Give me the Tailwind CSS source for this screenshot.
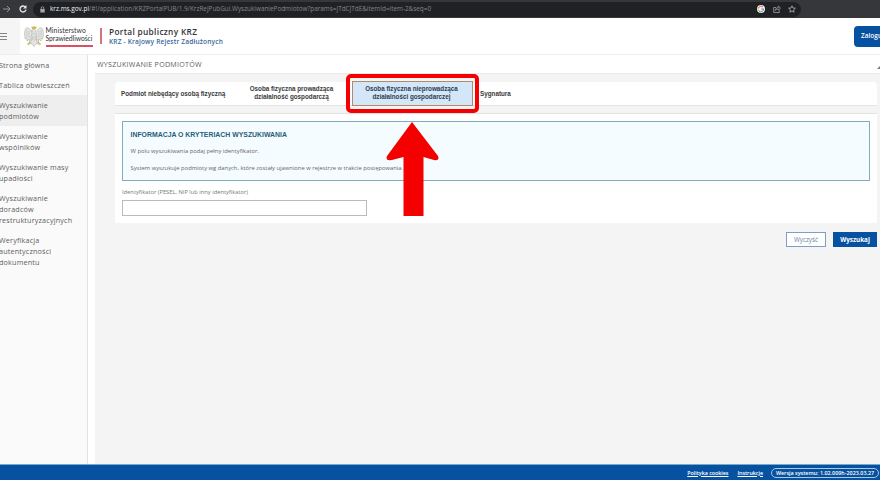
<!DOCTYPE html>
<html lang="pl">
<head>
  <meta charset="UTF-8" />
  <meta name="viewport" content="width=device-width, initial-scale=1" />
  <title>Portal publiczny KRZ</title>
  <script src="https://cdn.jsdelivr.net/npm/@tailwindcss/browser@4"></script>
</head>
<body class="relative w-[880px] h-[480px] overflow-hidden flex flex-col bg-white font-['Open_Sans',sans-serif] text-[#555] whitespace-nowrap">

  <!-- browser bar -->
  <div class="h-[18px] shrink-0 bg-[#36373a] flex items-center">
    <svg class="w-2 h-2 ml-[3px]" viewBox="0 0 8 8" fill="none" stroke="#929396" stroke-width="1"><path d="M0 4h7M4 1l3 3-3 3" /></svg>
    <svg class="w-2 h-2 ml-2" viewBox="0 0 8 8" fill="none" stroke="#e8e8e8" stroke-width="1.3"><path d="M6.5 2.2A3 3 0 1 0 7 4.7" /><path d="M7.5 0v3.4H4.1z" fill="#e8e8e8" stroke="none" /></svg>
    <div class="ml-1.5 w-[768px] h-[15px] rounded-full bg-[#202124] flex items-center">
      <svg class="w-[5px] h-[7px] ml-[7px] shrink-0" viewBox="0 0 5 7" fill="none" stroke="#a5a5a7"><path d="M1.2 3V2a1.3 1.3 0 0 1 2.6 0v1" stroke-width=".8" /><path d="M.3 3h4.4v3.5H.3z" fill="#a5a5a7" stroke="none" /></svg>
      <div class="ml-[5px] w-[707px] shrink-0 text-[6.4px] leading-[10px] text-[#85868a]"><span class="text-[#f0f0f0]">krz.ms.gov.pl</span><span class="tracking-[-0.01px]">/#!/application/KRZPortalPUB/1.9/KrzRejPubGui.WyszukiwaniePodmiotow?params=JTdCJTdE&amp;itemId=item-2&amp;seq=0</span></div>
      <svg class="w-2 h-2 shrink-0" viewBox="0 0 8 8"><circle cx="4" cy="4" r="4" fill="#eee" /><path d="M6 2a2.8 2.8 0 0 0-4.5 1" stroke="#e5604f" fill="none" /><path d="M1.4 3a3 3 0 0 0 .6 3" stroke="#e5bc45" fill="none" /><path d="M2 6.1a3 3 0 0 0 3 .5" stroke="#4da565" fill="none" /><path d="M5 6.5A3 3 0 0 0 6.7 4H4.3" stroke="#578cd6" fill="none" /></svg>
      <svg class="w-2 h-2 ml-2 shrink-0" viewBox="0 0 8 8" fill="none" stroke="#a0a1a3" stroke-width=".8"><path d="M3 2.5H.7v5h5.6V5.5M2.3 5.5c.2-2 1.5-3 3-3V1l2.2 2.2-2.2 2V4c-1.3 0-2.3.4-3 1.5z" /></svg>
      <svg class="w-2 h-2 ml-[7px] shrink-0" viewBox="0 0 8 8" fill="none" stroke="#b5b6b8" stroke-width=".8"><path d="M4 .8l1 2.2 2.4.2-1.8 1.6.5 2.4L4 6 1.9 7.2l.5-2.4L.6 3.2 3 3z" /></svg>
    </div>
  </div>

  <header class="h-[37px] shrink-0 flex items-center border-b border-[#eee]">
    <div class="w-5 h-full bg-[#f5f5f5] flex items-center">
      <svg class="w-[7px] h-[7px]" viewBox="0 0 7 7" stroke="#777" stroke-width=".9"><path d="M0 .5h7M0 3.5h7M0 6.5h7" /></svg>
    </div>
    <!-- eagle emblem -->
    <svg class="w-5 h-[21px] ml-1" viewBox="0 0 20 21">
      <g fill="#e6e6e4" stroke="#8e8e8a" stroke-width=".4">
        <path d="M8 8C7 3 4 1 2.3 2 .3 4 .2 9 1.3 13l1.5-1L3 15l2-2 .5 2.500L8 12z" />
        <path d="M12 8c1-5 4-7 5.700-6 2 2 2.100 7 1 11l-1.500-1-.2 3-2-2-.5 2.500L12 12z" />
        <path d="M8 4.500C8.500 3 11 2.800 11.500 4.500L11 7l2 3-.5 5 2 3-2.500-.5L10 20.500 8 17.500l-2.500.5 2-3L7 10l2-3-.2-1.500L7.200 5z" />
      </g>
      <path d="M3 4v7M5 5v7M15 5v7M17 4v7M10 8v8M8.500 10v4M11.500 10v4" stroke="#a5a5a1" stroke-width=".4" />
      <path d="M8.200 2.700L7.800.8l1.200.7 1-1.200 1 1.200 1.200-.7-.4 1.900zM6.200 15l-1 2.500-2.200.7M5.200 17.500l-.5 2M13.800 15l1 2.500 2.200.7M14.800 17.500l.5 2" fill="#c9b83e" stroke="#c9b83e" stroke-width=".7" />
    </svg>
    <div class="ml-[1.5px] w-[47px] h-[21px] mt-[1px] border-b-2 border-[#dc5160] font-[Lato,sans-serif] text-[6.8px] leading-[7.5px] text-[#333] flex flex-col pt-px">
      <span class="tracking-[0.1px]">Ministerstwo</span>
      <span class="tracking-[-0.06px]">Sprawiedliwości</span>
    </div>
    <div class="ml-[7.5px] w-[2px] h-4 bg-[#d9707c]"></div>
    <div class="ml-[7px] mt-px">
      <div class="text-[8.3px] leading-[10px] font-semibold text-[#333] tracking-[0.32px]">Portal publiczny KRZ</div>
      <div class="text-[6.5px] leading-[9px] font-semibold text-[#39679c] tracking-[0.19px]">KRZ - Krajowy Rejestr Zadłużonych</div>
    </div>
    <button class="ml-auto w-[26px] h-[21px] bg-[#0752a0] rounded-l-sm text-white text-[6.5px] font-semibold pl-[7px] text-left overflow-hidden">Zaloguj</button>
  </header>

  <div class="flex-1 min-h-0 flex">
    <nav class="w-[88px] shrink-0 bg-[#fafafa] border-r border-[#e2e2e2] text-[7.2px] leading-[10.9px] tracking-[0.18px] text-[#606060] flex flex-col *:-ml-px *:py-[4.6px]">
      <a>Strona główna</a>
      <a>Tablica obwieszczeń</a>
      <a class="bg-[#eee]">Wyszukiwanie<br>podmiotów</a>
      <a>Wyszukiwanie<br>wspólników</a>
      <a>Wyszukiwanie masy<br>upadłości</a>
      <a>Wyszukiwanie<br>doradców<br>restrukturyzacyjnych</a>
      <a>Weryfikacja<br>autentyczności<br>dokumentu</a>
    </nav>

    <main class="flex-1 min-w-0 flex flex-col pl-[7px]">
      <div class="h-[18px] shrink-0 flex items-center justify-between pl-[2px]">
        <h1 class="text-[7.1px] leading-[10px] tracking-[0.27px] text-[#606060]">WYSZUKIWANIE PODMIOTÓW</h1>
        <svg class="w-[3px] h-[3px] mt-1.5" viewBox="0 0 3 3"><path d="M3 0v3H0z" fill="#777" /></svg>
      </div>
      <div class="flex-1 bg-[#f4f4f4] border-t border-[#eaeaea] pl-5 pr-[3px] pt-[8px]">
        <!-- tabs -->
        <div class="h-[24px] bg-white rounded-t border-b border-[#e4e4e4] flex items-center text-center font-['Liberation_Sans',sans-serif] font-bold text-[6.3px] leading-[8px] text-[#3a3a3a]">
          <div class="ml-1.5 w-[105px] text-left">Podmiot niebędący osobą fizyczną</div>
          <div class="ml-[23px] w-[85px] -mt-px">Osoba fizyczna prowadząca<br>działalność gospodarczą</div>
          <div class="ml-[18px] w-[121px] h-[25px] shrink-0 bg-[#d3e7f9] border border-[#b28a68] text-[#2e3c50] flex items-center justify-center pb-[2px] pr-[2px]">Osoba fizyczna nieprowadząca<br>działalności gospodarczej</div>
          <div class="ml-[7px]">Sygnatura</div>
        </div>

        <!-- search form -->
        <div class="mt-[7px] h-[110px] bg-white border-t border-[#e2e2e2] pl-[7px] pt-[7px] pr-[7px]">
          <div class="h-[60px] border border-[#80adbd] bg-[#f4fcff] pl-[7.5px] pt-2 text-[5.83px] leading-[8px] text-[#666]">
            <h2 class="font-['Liberation_Sans',sans-serif] font-bold text-[6.9px] leading-[10px] text-[#285e7a]">INFORMACJA O KRYTERIACH WYSZUKIWANIA</h2>
            <p class="mt-[7px]">W polu wyszukiwania podaj pełny identyfikator.</p>
            <p class="mt-[9px]">System wyszukuje podmioty wg danych, które zostały ujawnione w rejestrze w trakcie postępowania.</p>
          </div>
          <label class="block mt-[7px] text-[5.75px] leading-[8px] text-[#777]">Identyfikator (PESEL, NIP lub inny identyfikator)</label>
          <input type="text" class="block mt-1 w-[245px] h-4 bg-white border border-[#bbb]" />
        </div>

        <div class="mt-[9px] flex justify-end gap-[7px] text-[6.3px]">
          <button class="w-10 h-[15px] bg-white border border-[#7b9fc9] text-[#6685aa]">Wyczyść</button>
          <button class="w-11 h-[15px] bg-[#0752a0] text-white font-bold">Wyszukaj</button>
        </div>
      </div>
    </main>
  </div>

  <footer class="h-4 shrink-0 bg-[#0752a0] border-t border-[#75a9ce] flex items-center justify-end text-white text-[5.4px] leading-[8px] font-semibold">
    <a class="underline tracking-[-0.04px]">Polityka cookies</a>
    <a class="underline ml-[9px] tracking-[-0.04px]">Instrukcje</a>
    <div class="ml-[8px] mr-px w-[108px] h-[10px] border border-[#a9c6e2] rounded-full flex items-center justify-center">Wersja systemu: 1.02.009h-2023.03.27</div>
  </footer>

  <!-- highlight over the active tab -->
  <div class="absolute left-[346px] top-[74px] w-[133px] h-[39px] border-4 border-[#f50000] rounded-[5px]"></div>
  <svg class="absolute left-[386px] top-[121px] w-[54px] h-[96px]" viewBox="0 0 54 96"><path d="M26 1L52 35Q54 40 48 39L37.5 36V95H17.5V36L6 39Q-1 40 1 35Z" fill="#f50000" /></svg>
</body>
</html>
